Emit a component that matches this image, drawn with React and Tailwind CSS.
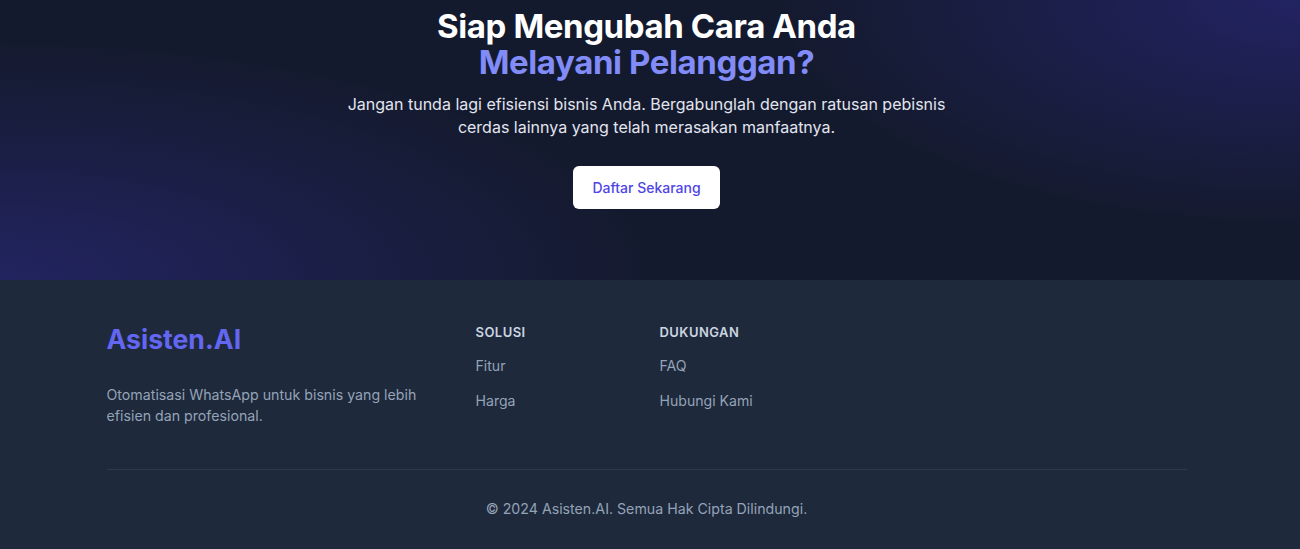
export default function App() {
  return (
    <div className="w-[1300px] font-['Inter',sans-serif] antialiased">
      <section className="h-[280px] bg-[#141a2e] bg-[radial-gradient(ellipse_50%_85%_at_0%_100%,rgba(34,36,96,1),rgba(34,36,96,0)),radial-gradient(ellipse_40%_80%_at_100%_0%,rgba(34,35,98,1),rgba(34,35,98,0))] pr-[7px]">
        <div className="flex flex-col items-center pt-[8px] text-center">
          <h2 className="text-[33px] font-bold leading-[36px] tracking-[-0.4px] text-white">
            Siap Mengubah Cara Anda
            <span className="block text-[#818cf8]">Melayani Pelanggan?</span>
          </h2>
          <p className="mt-[13px] max-w-[620px] text-[16px] leading-[23px] text-[#e2e5ee]">
            Jangan tunda lagi efisiensi bisnis Anda. Bergabunglah dengan ratusan pebisnis cerdas lainnya yang telah merasakan manfaatnya.
          </p>
          <a
            href="#"
            className="mt-[27px] flex h-[43px] w-[147px] items-center justify-center rounded-md bg-white text-[14px] font-medium text-[#4f46e5]"
          >
            Daftar Sekarang
          </a>
        </div>
      </section>
      <footer className="h-[269px] bg-[#1e293b] pr-[7px]">
        <div className="mx-auto w-[1080px] pt-[41px]">
          <div className="grid grid-cols-[369px_184px_1fr]">
            <div>
              <div className="text-[26.6px] font-bold leading-[36px] text-[#6366f1]">Asisten.AI</div>
              <p className="mt-[27px] max-w-[320px] text-[14.2px] leading-[21px] text-[#94a3b8]">
                Otomatisasi WhatsApp untuk bisnis yang lebih efisien dan profesional.
              </p>
            </div>
            <div className="pt-[1px]">
              <h4 className="text-[13px] font-semibold uppercase leading-[20px] tracking-[0.45px] text-[#cbd5e1]">Solusi</h4>
              <ul className="mt-[14px] flex flex-col gap-[15px] text-[14.1px] leading-[20px] text-[#94a3b8]">
                <li>Fitur</li>
                <li>Harga</li>
              </ul>
            </div>
            <div className="pt-[1px]">
              <h4 className="text-[13px] font-semibold uppercase leading-[20px] tracking-[0.45px] text-[#cbd5e1]">Dukungan</h4>
              <ul className="mt-[14px] flex flex-col gap-[15px] text-[14.1px] leading-[20px] text-[#94a3b8]">
                <li>FAQ</li>
                <li>Hubungi Kami</li>
              </ul>
            </div>
          </div>
          <div className="mt-[43px] border-t border-[#2c3a4f] pt-[29px] text-center text-[14.2px] leading-[20px] text-[#94a3b8]">
            © 2024 Asisten.AI. Semua Hak Cipta Dilindungi.
          </div>
        </div>
      </footer>
    </div>
  );
}
